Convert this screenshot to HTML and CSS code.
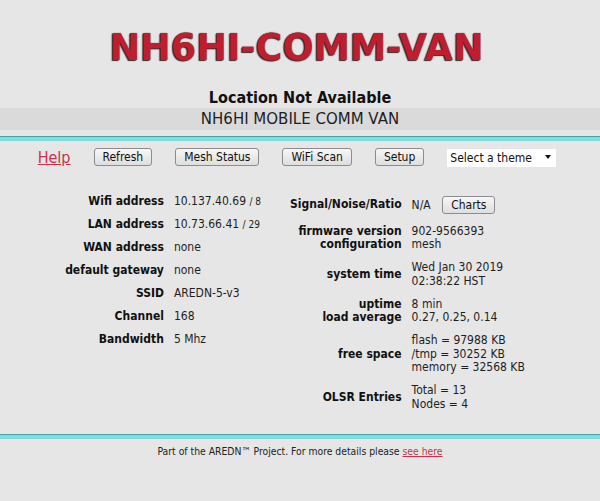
FILE: index.html
```html
<!DOCTYPE html>
<html>
<head>
    <title>NH6HI-COMM-VAN</title>
    <meta charset="UTF-8">
    <link rel="stylesheet" href="styles.css">
</head>
<body>
    <div class="header">
        <h1 class="node-name">NH6HI-COMM-VAN</h1>
        <h3 class="location">Location Not Available</h3>
        <div class="description">NH6HI MOBILE COMM VAN</div>
    </div>
    <div class="rule"></div>

    <div class="nav">
        <a href="#" class="help">Help</a>
        <button class="btn">Refresh</button>
        <button class="btn">Mesh Status</button>
        <button class="btn">WiFi Scan</button>
        <button class="btn">Setup</button>
        <span class="theme-wrap">
            <select class="theme">
                <option>Select a theme</option>
            </select>
        </span>
    </div>

    <div class="status">
        <table class="info">
            <tr><th>Wifi address</th><td>10.137.40.69 <small>/ 8</small></td></tr>
            <tr><th>LAN address</th><td>10.73.66.41 <small>/ 29</small></td></tr>
            <tr><th>WAN address</th><td>none</td></tr>
            <tr><th>default gateway</th><td>none</td></tr>
            <tr><th>SSID</th><td>AREDN-5-v3</td></tr>
            <tr><th>Channel</th><td>168</td></tr>
            <tr><th>Bandwidth</th><td>5 Mhz</td></tr>
        </table>
        <table class="info">
            <tr class="signal"><th>Signal/Noise/Ratio</th><td>N/A <button class="btn charts">Charts</button></td></tr>
            <tr><th>firmware version<br>configuration</th><td>902-9566393<br>mesh</td></tr>
            <tr><th>system time</th><td>Wed Jan 30 2019<br>02:38:22 HST</td></tr>
            <tr><th>uptime<br>load average</th><td>8 min<br>0.27, 0.25, 0.14</td></tr>
            <tr><th>free space</th><td>flash = 97988 KB<br>/tmp = 30252 KB<br>memory = 32568 KB</td></tr>
            <tr><th>OLSR Entries</th><td>Total = 13<br>Nodes = 4</td></tr>
        </table>
    </div>

    <div class="rule"></div>
    <div class="footer">Part of the AREDN&trade; Project. For more details please <a href="#">see here</a></div>
</body>
</html>
```

FILE: styles.css
```css
/* pagina de status do no */
body {
    font-family: "DejaVu Sans Condensed", "DejaVu Sans", sans-serif;
    background-color: #e6e6e6;
    color: #1e1e1e;
    margin: 0;
    padding: 0;
}
.header {
    text-align: center;
    padding-top: 27px;
}
.node-name {
    font-family: "DejaVu Sans", sans-serif;
    font-size: 36.6px;
    line-height: 42px;
    font-weight: bold;
    color: #be1e2d;
    text-shadow: -1px 1px 1px #3a2a2a, 0 0 1px #222;
    margin: 0 0 0 -7px;
}
.location {
    font-size: 16px;
    line-height: 18px;
    margin: 20px 0 0 0;
    color: #111;
}
.description {
    font-family: "DejaVu Sans", sans-serif;
    background-color: #dadada;
    font-size: 15px;
    line-height: 22px;
    margin-top: 1px;
}
.rule {
    height: 3px;
    border-top: 1px solid #4e9fa3;
    border-bottom: 1px solid #8ed2d2;
    background-color: #6fe6e6;
    margin-top: 6px;
}
.nav {
    display: flex;
    justify-content: center;
    align-items: center;
    gap: 23px;
    margin-top: 6px;
    height: 20px;
    padding-right: 6px;
}
.help {
    color: #c8334a;
    font-size: 16px;
}
.btn {
    font-family: "DejaVu Sans Condensed", "DejaVu Sans", sans-serif;
    font-size: 12px;
    height: 18px;
    padding: 0 8px;
    color: #111;
    background: linear-gradient(#f7f7f7, #dedede);
    border: 1px solid #8c8c8c;
    border-radius: 3px;
    cursor: pointer;
}
.theme-wrap {
    position: relative;
    display: inline-block;
}
.theme {
    -webkit-appearance: none;
    appearance: none;
    font-family: "DejaVu Sans Condensed", "DejaVu Sans", sans-serif;
    font-size: 12px;
    width: 109px;
    height: 18px;
    padding: 0 3px;
    border: none;
    background-color: #fff;
    color: #111;
}
.theme-wrap::after {
    content: "";
    position: absolute;
    right: 5px;
    top: 8px;
    border-left: 3px solid transparent;
    border-right: 3px solid transparent;
    border-top: 4px solid #111;
}
.status {
    display: flex;
    justify-content: center;
    align-items: flex-start;
    gap: 29px;
    margin-top: 23px;
    height: 238px;
    padding-right: 10px;
}
.info {
    border-collapse: collapse;
    font-size: 12px;
    line-height: 13.5px;
}
.info th {
    text-align: right;
    font-weight: bold;
    color: #111;
    padding: 4.75px 10px 4.75px 0;
    white-space: nowrap;
}
.info td {
    text-align: left;
    padding: 4.75px 0;
    white-space: nowrap;
}
.info small {
    font-size: 10px;
}
.signal th, .signal td {
    padding-top: 6px;
    padding-bottom: 6px;
}
.charts {
    margin-left: 8px;
    padding: 0 8px;
}
.footer {
    text-align: center;
    font-size: 10.3px;
    margin-top: 6px;
    color: #222;
}
.footer a {
    color: #c8334a;
}
```
